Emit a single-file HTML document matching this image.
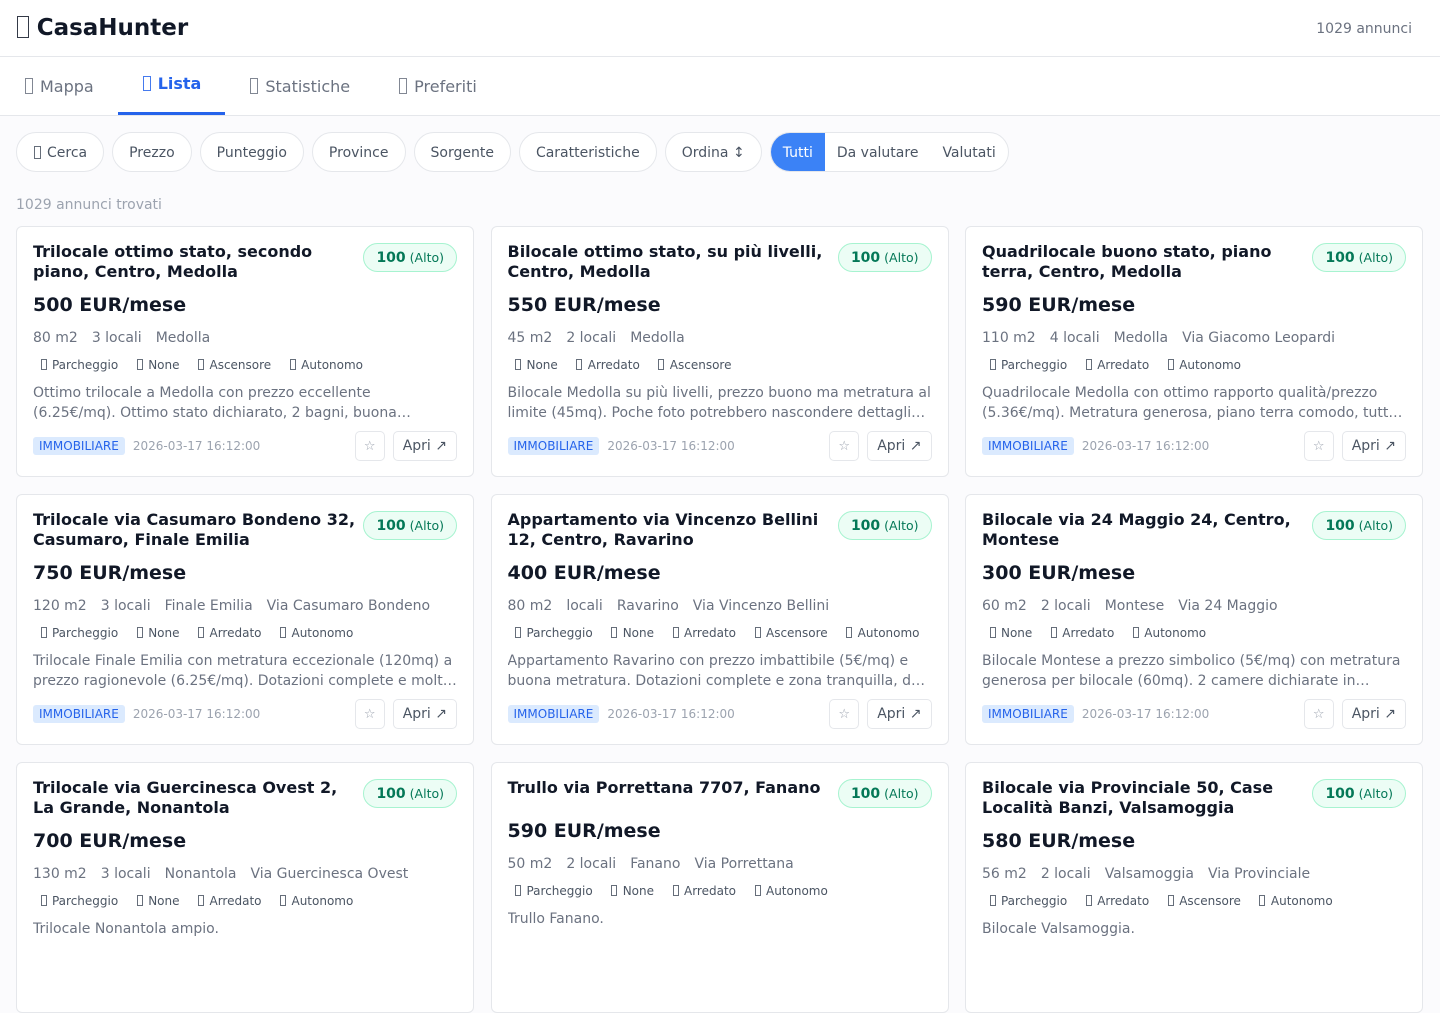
<!DOCTYPE html>
<html><head><meta charset="utf-8"><style>
*{box-sizing:border-box;margin:0;padding:0}
body{width:1440px;height:900px;overflow:hidden;background:#fbfbfd;font-family:"DejaVu Sans","Liberation Sans",sans-serif;color:#111827}
.x{display:inline-block;width:.5em;height:.95em;border:1px solid currentColor;vertical-align:-0.12em;margin-right:.45em;margin-left:.05em;opacity:.85}
.hdr{height:57px;border-bottom:1px solid #e5e7eb;display:flex;align-items:center;justify-content:space-between;padding:0 28px 0 16px;background:#fff}
.hdr h1{font-size:23px;font-weight:bold;color:#111827}
.hdr h1 .x{margin-right:.35em}
.hdr span{font-size:14px;color:#6b7280;margin-top:2px}
.tabs{height:59px;border-bottom:1px solid #e5e7eb;display:flex;background:#fff}
.tab{padding:0 24px;font-size:16px;color:#6b7280;display:flex;align-items:center;height:58px;padding-top:0}
.tab.on{color:#2563eb;font-weight:bold;border-bottom:3px solid #2563eb;padding-bottom:2px}
.filters{display:flex;gap:8px;padding:16px 16px 0;height:56px}
.pill{height:40px;border:1px solid #e5e7eb;border-radius:20px;padding:0 16px;display:flex;align-items:center;font-size:14px;color:#4b5563;background:#fff;padding-top:1px}
.seg{display:flex;height:40px;border:1px solid #e5e7eb;border-radius:20px;overflow:hidden;background:#fff}
.seg div{padding:0 12px;display:flex;align-items:center;font-size:14px;color:#4b5563;padding-top:1px}
.seg .a{background:#3b82f6;color:#fff}
.cnt{font-size:14px;color:#9ca3af;padding:22px 16px 0;height:54px;line-height:22px}
.grid{display:grid;grid-template-columns:458px 458px 458px;column-gap:16.5px;row-gap:17px;padding:0 16px}
.card{background:#fff;border:1px solid #e5e7eb;border-radius:6px;padding:15px 16px 16px;height:251px;overflow:hidden}
.h{display:flex;justify-content:space-between;align-items:flex-start;gap:6px}
.t{font-size:16px;font-weight:bold;line-height:20px;color:#111827;flex:1}
.b{height:29px;border:1px solid #a7f3d0;background:#ecfdf5;border-radius:15px;padding:0 12px;font-size:14px;font-weight:bold;color:#047857;display:flex;align-items:center;white-space:nowrap;margin-top:1px}
.b small{font-weight:normal;font-size:12.5px;margin-left:4px}
.p{font-size:19px;font-weight:bold;line-height:24px;margin-top:11px}
.m{font-size:14px;color:#6b7280;line-height:20px;margin-top:11px}
.m span{margin-right:14px}
.f{font-size:12px;color:#4b5563;line-height:18px;margin-top:8px;padding-left:7px;white-space:nowrap}
.f span{margin-right:18px}
.d{font-size:14px;color:#6b7280;line-height:20px;margin-top:9px;display:-webkit-box;-webkit-line-clamp:2;-webkit-box-orient:vertical;overflow:hidden}
.ft{display:flex;align-items:center;margin-top:8px;height:30px}
.src{background:#dbeafe;color:#2563eb;font-size:12px;padding:2px 6px;border-radius:3px}
.dt{font-size:12px;color:#9ca3af;margin-left:8px;flex:1}
.st{width:30px;height:30px;border:1px solid #e5e7eb;border-radius:5px;display:flex;align-items:center;justify-content:center;color:#9ca3af;font-size:13px;margin-right:8px}
.ap{height:30px;border:1px solid #e5e7eb;border-radius:5px;padding:0 9px;display:flex;align-items:center;font-size:14px;color:#4b5563}
</style></head><body>
<div class="hdr"><h1><i class="x"></i>CasaHunter</h1><span>1029 annunci</span></div>
<div class="tabs"><div class="tab"><i class="x"></i>Mappa</div><div class="tab on"><i class="x"></i>Lista</div><div class="tab"><i class="x"></i>Statistiche</div><div class="tab"><i class="x"></i>Preferiti</div></div>
<div class="filters"><div class="pill"><i class="x"></i>Cerca</div><div class="pill">Prezzo</div><div class="pill">Punteggio</div><div class="pill">Province</div><div class="pill">Sorgente</div><div class="pill">Caratteristiche</div><div class="pill">Ordina ↕</div><div class="seg"><div class="a">Tutti</div><div>Da valutare</div><div>Valutati</div></div></div>
<div class="cnt">1029 annunci trovati</div>
<div class="grid">
<div class="card"><div class="h"><div class="t">Trilocale ottimo stato, secondo piano, Centro, Medolla</div><div class="b">100<small>(Alto)</small></div></div><div class="p">500 EUR/mese</div><div class="m"><span>80 m2</span><span>3 locali</span><span>Medolla</span></div><div class="f"><span><i class="x"></i>Parcheggio</span><span><i class="x"></i>None</span><span><i class="x"></i>Ascensore</span><span><i class="x"></i>Autonomo</span></div><div class="d">Ottimo trilocale a Medolla con prezzo eccellente (6.25€/mq). Ottimo stato dichiarato, 2 bagni, buona metratura e dotazioni complete.</div><div class="ft"><span class="src">IMMOBILIARE</span><span class="dt">2026-03-17 16:12:00</span><div class="st">☆</div><div class="ap">Apri ↗</div></div></div>
<div class="card"><div class="h"><div class="t">Bilocale ottimo stato, su più livelli, Centro, Medolla</div><div class="b">100<small>(Alto)</small></div></div><div class="p">550 EUR/mese</div><div class="m"><span>45 m2</span><span>2 locali</span><span>Medolla</span></div><div class="f"><span><i class="x"></i>None</span><span><i class="x"></i>Arredato</span><span><i class="x"></i>Ascensore</span></div><div class="d">Bilocale Medolla su più livelli, prezzo buono ma metratura al limite (45mq). Poche foto potrebbero nascondere dettagli importanti.</div><div class="ft"><span class="src">IMMOBILIARE</span><span class="dt">2026-03-17 16:12:00</span><div class="st">☆</div><div class="ap">Apri ↗</div></div></div>
<div class="card"><div class="h"><div class="t">Quadrilocale buono stato, piano terra, Centro, Medolla</div><div class="b">100<small>(Alto)</small></div></div><div class="p">590 EUR/mese</div><div class="m"><span>110 m2</span><span>4 locali</span><span>Medolla</span><span>Via Giacomo Leopardi</span></div><div class="f"><span><i class="x"></i>Parcheggio</span><span><i class="x"></i>Arredato</span><span><i class="x"></i>Autonomo</span></div><div class="d">Quadrilocale Medolla con ottimo rapporto qualità/prezzo (5.36€/mq). Metratura generosa, piano terra comodo, tutto incluso.</div><div class="ft"><span class="src">IMMOBILIARE</span><span class="dt">2026-03-17 16:12:00</span><div class="st">☆</div><div class="ap">Apri ↗</div></div></div>
<div class="card"><div class="h"><div class="t">Trilocale via Casumaro Bondeno 32, Casumaro, Finale Emilia</div><div class="b">100<small>(Alto)</small></div></div><div class="p">750 EUR/mese</div><div class="m"><span>120 m2</span><span>3 locali</span><span>Finale Emilia</span><span>Via Casumaro Bondeno</span></div><div class="f"><span><i class="x"></i>Parcheggio</span><span><i class="x"></i>None</span><span><i class="x"></i>Arredato</span><span><i class="x"></i>Autonomo</span></div><div class="d">Trilocale Finale Emilia con metratura eccezionale (120mq) a prezzo ragionevole (6.25€/mq). Dotazioni complete e molto spazio.</div><div class="ft"><span class="src">IMMOBILIARE</span><span class="dt">2026-03-17 16:12:00</span><div class="st">☆</div><div class="ap">Apri ↗</div></div></div>
<div class="card"><div class="h"><div class="t">Appartamento via Vincenzo Bellini 12, Centro, Ravarino</div><div class="b">100<small>(Alto)</small></div></div><div class="p">400 EUR/mese</div><div class="m"><span>80 m2</span><span>locali</span><span>Ravarino</span><span>Via Vincenzo Bellini</span></div><div class="f"><span><i class="x"></i>Parcheggio</span><span><i class="x"></i>None</span><span><i class="x"></i>Arredato</span><span><i class="x"></i>Ascensore</span><span><i class="x"></i>Autonomo</span></div><div class="d">Appartamento Ravarino con prezzo imbattibile (5€/mq) e buona metratura. Dotazioni complete e zona tranquilla, da verificare.</div><div class="ft"><span class="src">IMMOBILIARE</span><span class="dt">2026-03-17 16:12:00</span><div class="st">☆</div><div class="ap">Apri ↗</div></div></div>
<div class="card"><div class="h"><div class="t">Bilocale via 24 Maggio 24, Centro, Montese</div><div class="b">100<small>(Alto)</small></div></div><div class="p">300 EUR/mese</div><div class="m"><span>60 m2</span><span>2 locali</span><span>Montese</span><span>Via 24 Maggio</span></div><div class="f"><span><i class="x"></i>None</span><span><i class="x"></i>Arredato</span><span><i class="x"></i>Autonomo</span></div><div class="d">Bilocale Montese a prezzo simbolico (5€/mq) con metratura generosa per bilocale (60mq). 2 camere dichiarate in annuncio.</div><div class="ft"><span class="src">IMMOBILIARE</span><span class="dt">2026-03-17 16:12:00</span><div class="st">☆</div><div class="ap">Apri ↗</div></div></div>
<div class="card"><div class="h"><div class="t">Trilocale via Guercinesca Ovest 2, La Grande, Nonantola</div><div class="b">100<small>(Alto)</small></div></div><div class="p">700 EUR/mese</div><div class="m"><span>130 m2</span><span>3 locali</span><span>Nonantola</span><span>Via Guercinesca Ovest</span></div><div class="f"><span><i class="x"></i>Parcheggio</span><span><i class="x"></i>None</span><span><i class="x"></i>Arredato</span><span><i class="x"></i>Autonomo</span></div><div class="d">Trilocale Nonantola ampio.</div></div>
<div class="card"><div class="h"><div class="t">Trullo via Porrettana 7707, Fanano</div><div class="b">100<small>(Alto)</small></div></div><div class="p">590 EUR/mese</div><div class="m"><span>50 m2</span><span>2 locali</span><span>Fanano</span><span>Via Porrettana</span></div><div class="f"><span><i class="x"></i>Parcheggio</span><span><i class="x"></i>None</span><span><i class="x"></i>Arredato</span><span><i class="x"></i>Autonomo</span></div><div class="d">Trullo Fanano.</div></div>
<div class="card"><div class="h"><div class="t">Bilocale via Provinciale 50, Case Località Banzi, Valsamoggia</div><div class="b">100<small>(Alto)</small></div></div><div class="p">580 EUR/mese</div><div class="m"><span>56 m2</span><span>2 locali</span><span>Valsamoggia</span><span>Via Provinciale</span></div><div class="f"><span><i class="x"></i>Parcheggio</span><span><i class="x"></i>Arredato</span><span><i class="x"></i>Ascensore</span><span><i class="x"></i>Autonomo</span></div><div class="d">Bilocale Valsamoggia.</div></div>
</div>
</body></html>
